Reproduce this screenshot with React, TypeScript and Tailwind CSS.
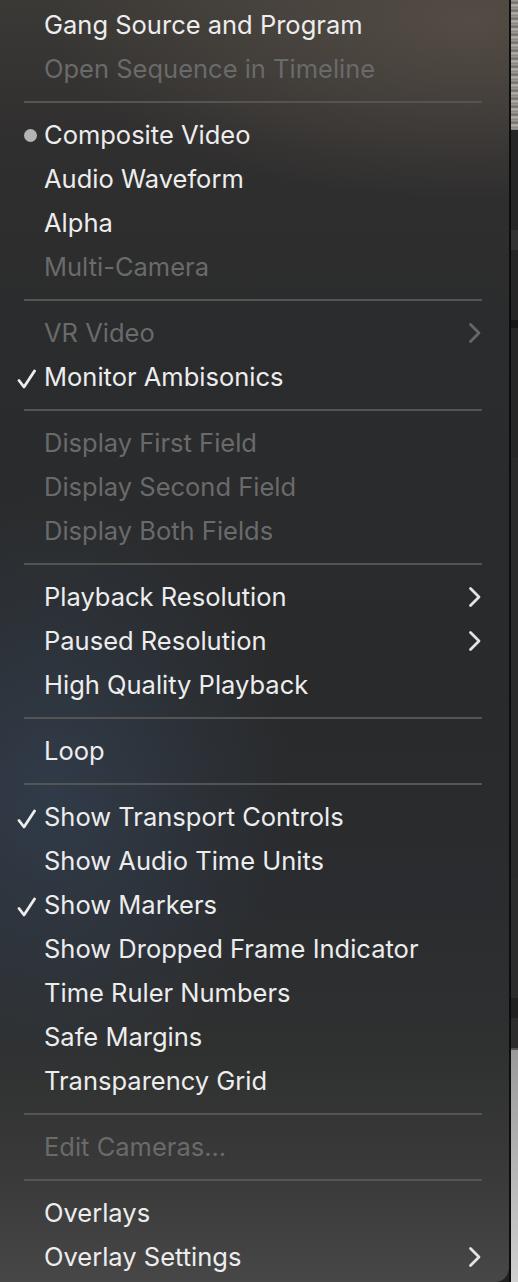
import React from "react";

type Row =
  | { kind: "sep" }
  | {
      kind: "item";
      label: string;
      disabled?: boolean;
      mark?: "check" | "dot";
      submenu?: boolean;
    };

const rows: Row[] = [
  { kind: "item", label: "Gang Source and Program" },
  { kind: "item", label: "Open Sequence in Timeline", disabled: true },
  { kind: "sep" },
  { kind: "item", label: "Composite Video", mark: "dot" },
  { kind: "item", label: "Audio Waveform" },
  { kind: "item", label: "Alpha" },
  { kind: "item", label: "Multi-Camera", disabled: true },
  { kind: "sep" },
  { kind: "item", label: "VR Video", disabled: true, submenu: true },
  { kind: "item", label: "Monitor Ambisonics", mark: "check" },
  { kind: "sep" },
  { kind: "item", label: "Display First Field", disabled: true },
  { kind: "item", label: "Display Second Field", disabled: true },
  { kind: "item", label: "Display Both Fields", disabled: true },
  { kind: "sep" },
  { kind: "item", label: "Playback Resolution", submenu: true },
  { kind: "item", label: "Paused Resolution", submenu: true },
  { kind: "item", label: "High Quality Playback" },
  { kind: "sep" },
  { kind: "item", label: "Loop" },
  { kind: "sep" },
  { kind: "item", label: "Show Transport Controls", mark: "check" },
  { kind: "item", label: "Show Audio Time Units" },
  { kind: "item", label: "Show Markers", mark: "check" },
  { kind: "item", label: "Show Dropped Frame Indicator" },
  { kind: "item", label: "Time Ruler Numbers" },
  { kind: "item", label: "Safe Margins" },
  { kind: "item", label: "Transparency Grid" },
  { kind: "sep" },
  { kind: "item", label: "Edit Cameras...", disabled: true },
  { kind: "sep" },
  { kind: "item", label: "Overlays" },
  { kind: "item", label: "Overlay Settings", submenu: true },
];

function CheckMark() {
  return (
    <svg width="19" height="20" viewBox="0 0 19 20" fill="none">
      <path
        d="M2 11.5 L7 18 L17.5 2"
        stroke="#ececec"
        strokeWidth="2.8"
        strokeLinecap="round"
        strokeLinejoin="round"
      />
    </svg>
  );
}

function Chevron({ dim }: { dim?: boolean }) {
  return (
    <svg width="14" height="22" viewBox="0 0 14 22" fill="none">
      <path
        d="M2.5 2.5 L11 11 L2.5 19.5"
        stroke={dim ? "#676767" : "#e4e4e4"}
        strokeWidth="2.8"
        strokeLinecap="round"
        strokeLinejoin="round"
      />
    </svg>
  );
}

function MenuItem({ row }: { row: Extract<Row, { kind: "item" }> }) {
  return (
    <div className="flex h-[44px] items-center">
      <div className="flex w-[44px] shrink-0 items-center justify-end pr-[8px]">
        {row.mark === "check" && (
          <span className="mt-[3px]">
            <CheckMark />
          </span>
        )}
        {row.mark === "dot" && (
          <span className="mr-[-1px] h-[13px] w-[13px] rounded-full bg-[#b4b4b4]" />
        )}
      </div>
      <span
        className={`flex-1 whitespace-nowrap text-[25.5px] leading-none ${
          row.disabled ? "text-[#6a6a6a]" : "text-[#ededed]"
        }`}
      >
        {row.label}
      </span>
      {row.submenu && (
        <span className="mr-[27px] flex items-center">
          <Chevron dim={row.disabled} />
        </span>
      )}
    </div>
  );
}

export default function App() {
  return (
    <div className="flex h-[1282px] w-[518px] overflow-hidden bg-[#202020]">
      <div
        className="relative h-full w-[509px] shrink-0 rounded-br-[14px] bg-[radial-gradient(ellipse_240px_300px_at_50px_790px,rgba(52,68,88,0.65),transparent),radial-gradient(ellipse_420px_180px_at_470px_20px,rgba(86,78,70,0.9),transparent),linear-gradient(180deg,#3b3936_0px,#302f2f_140px,#2b2c2d_320px,#292a2b_700px,#2a2c2f_900px,#2f3030_1050px,#3a3a3a_1180px,#474747_1282px)] pt-[3px] font-['Inter','Noto_Sans',sans-serif]"
      >
        {rows.map((row, i) =>
          row.kind === "sep" ? (
            <div key={i} className="flex h-[22px] items-center">
              <div className="ml-[24px] h-[2px] w-[458px] bg-[#545454]" />
            </div>
          ) : (
            <MenuItem key={i} row={row} />
          )
        )}
      </div>
      <div className="w-[2px] shrink-0 bg-[#0c0c0c]" />
      <div className="flex flex-1 flex-col">
        <div className="h-[130px] bg-[repeating-linear-gradient(180deg,#a39f9a_0px,#6e6a66_3px,#b9b5b0_5px,#857f7a_8px)]" />
        <div className="h-[100px] bg-[#262626]" />
        <div className="h-[20px] bg-[#333333]" />
        <div className="h-[70px] bg-[#262626]" />
        <div className="h-[8px] bg-[#161616]" />
        <div className="h-[130px] bg-[#262626]" />
        <div className="h-[420px] bg-[#2a2a2a]" />
        <div className="h-[120px] bg-[#2c2c2c]" />
        <div className="h-[20px] bg-[#202020]" />
        <div className="h-[30px] bg-[#2c2c2c]" />
        <div className="h-[2px] bg-[#555555]" />
        <div className="flex-1 bg-[linear-gradient(180deg,#9a9a9a,#d0d0d0)]" />
      </div>
    </div>
  );
}
